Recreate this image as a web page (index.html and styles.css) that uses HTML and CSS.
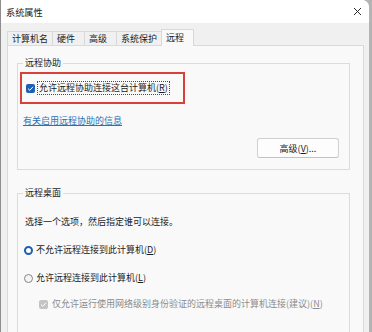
FILE: index.html
```html
<!DOCTYPE html>
<html lang="zh-CN">
<head>
    <meta charset="UTF-8">
    <title>系统属性</title>
    <link rel="stylesheet" href="styles.css">
</head>
<body>
    <div class="window">
        <div class="titlebar">
            <span class="title">系统属性</span>
            <svg class="close" width="9" height="9" viewBox="0 0 9 9">
                <path d="M1 1 L8 8 M8 1 L1 8" stroke="#2b2b2b" stroke-width="1" fill="none"/>
            </svg>
        </div>

        <div class="tabs">
            <div class="tab">计算机名</div>
            <div class="tab">硬件</div>
            <div class="tab">高级</div>
            <div class="tab">系统保护</div>
            <div class="tab tab-active">远程</div>
        </div>

        <div class="panel">
            <fieldset class="group group-assist">
                <legend>远程协助</legend>
                <div class="highlight">
                    <div class="check-row">
                        <span class="checkbox">
                            <svg width="9" height="9" viewBox="0 0 9 9"><path d="M2 4.6 L3.8 6.3 L7 2.8" stroke="#fff" stroke-width="1" fill="none"/></svg>
                        </span>
                        <span class="focus-text">允许远程协助连接这台计算机(<u>R</u>)</span>
                    </div>
                </div>
                <a class="link" href="#">有关启用远程协助的信息</a>
                <div class="btn-row">
                    <button class="btn">高级(<u>V</u>)...</button>
                </div>
            </fieldset>

            <fieldset class="group group-desktop">
                <legend>远程桌面</legend>
                <p class="hint">选择一个选项，然后指定谁可以连接。</p>
                <div class="radio-row">
                    <span class="radio radio-on"></span>不允许远程连接到此计算机(<u>D</u>)
                </div>
                <div class="radio-row radio-row-next">
                    <span class="radio"></span>允许远程连接到此计算机(<u>L</u>)
                </div>
                <div class="sub-row">
                    <span class="checkbox checkbox-disabled">
                        <svg width="9" height="9" viewBox="0 0 9 9"><path d="M2 4.6 L3.8 6.3 L7 2.8" stroke="#fff" stroke-width="1" fill="none"/></svg>
                    </span>
                    仅允许运行使用网络级别身份验证的远程桌面的计算机连接(建议)(<u>N</u>)
                </div>
            </fieldset>
        </div>
    </div>
</body>
</html>
```

FILE: styles.css
```css
* {
    margin: 0;
    padding: 0;
    box-sizing: border-box;
}

body {
    font-family: "Noto Sans CJK SC", "Noto Sans", sans-serif;
    font-size: 9px;
    line-height: 12px;
    color: #1b1b1b;
    background: #b4b4b4;
    width: 372px;
    height: 332px;
    overflow: hidden;
}

.window {
    width: 369px;
    height: 332px;
    background: #f0f0f0;
    border-left: 1px solid #8e8e8e;
    border-top-right-radius: 7px;
    overflow: hidden;
}

.titlebar {
    height: 23px;
    background: #ffffff;
    display: flex;
    align-items: center;
    justify-content: space-between;
    padding: 0 7px 0 5px;
}

.title {
    font-size: 9.2px;
}

.close {
    display: block;
}

.tabs {
    display: flex;
    align-items: flex-end;
    height: 16px;
    margin-top: 6px;
    padding-left: 6px;
    position: relative;
    z-index: 1;
}

.tab {
    height: 14px;
    min-width: 33px;
    padding: 0 4px;
    line-height: 13px;
    border: 1px solid #d9d9d9;
    border-bottom: none;
    margin-right: -1px;
    background: #f0f0f0;
}

.tab-active {
    height: 17px;
    margin-bottom: -1px;
    line-height: 15px;
    background: #f9f9f9;
}

.panel {
    width: 357px;
    height: 300px;
    margin-left: 6px;
    background: #f9f9f9;
    border: 1px solid #dadada;
    padding-top: 11px;
}

.group {
    width: 333px;
    margin-left: 9px;
    border: 1px solid #dcdcdc;
    padding: 3px 2px 11px 2px;
}

.group legend {
    margin-left: 3px;
    padding: 0 2px;
    line-height: 12px;
}

.highlight {
    width: 165px;
    height: 32px;
    border: 2px solid #d8403a;
    padding: 7px 0 0 4px;
}

.check-row {
    display: flex;
    align-items: center;
    height: 14px;
}

.checkbox {
    width: 9px;
    height: 9px;
    border-radius: 2px;
    background: #1d5fb0;
    display: flex;
    margin-right: 2px;
}

.checkbox-disabled {
    background: #c4c4c4;
    margin-right: 4px;
}

.focus-text {
    border: 1px dotted #4a4a4a;
    padding: 0 1px;
    line-height: 12px;
}

.link {
    display: block;
    margin: 11px 0 0 3px;
    color: #2f6fb0;
    text-decoration: underline;
    width: max-content;
}

.btn-row {
    display: flex;
    justify-content: flex-end;
    margin-top: 11px;
    padding-right: 8px;
}

.btn {
    width: 82px;
    height: 20px;
    font-family: inherit;
    font-size: 9px;
    color: #1b1b1b;
    background: #fdfdfd;
    border: 1px solid #d0d0d0;
    border-bottom-color: #c2c2c2;
    border-radius: 3px;
}

.btn u,
.focus-text u,
.radio-row u,
.sub-row u {
    text-underline-offset: 1px;
}

.group-desktop {
    margin-top: 17px;
    height: 160px;
}

.hint {
    margin: 14px 0 0 5px;
}

.radio-row {
    display: flex;
    align-items: center;
    height: 12px;
    margin: 16px 0 0 4px;
}

.radio {
    width: 9px;
    height: 9px;
    border-radius: 50%;
    border: 1px solid #858585;
    background: #f4f4f4;
    margin-right: 3px;
}

.radio-on {
    border: 2.5px solid #1d5fb0;
    background: #ffffff;
}

.sub-row {
    display: flex;
    align-items: center;
    height: 12px;
    margin: 14px 0 0 19px;
    color: #8b8b8b;
}
```
